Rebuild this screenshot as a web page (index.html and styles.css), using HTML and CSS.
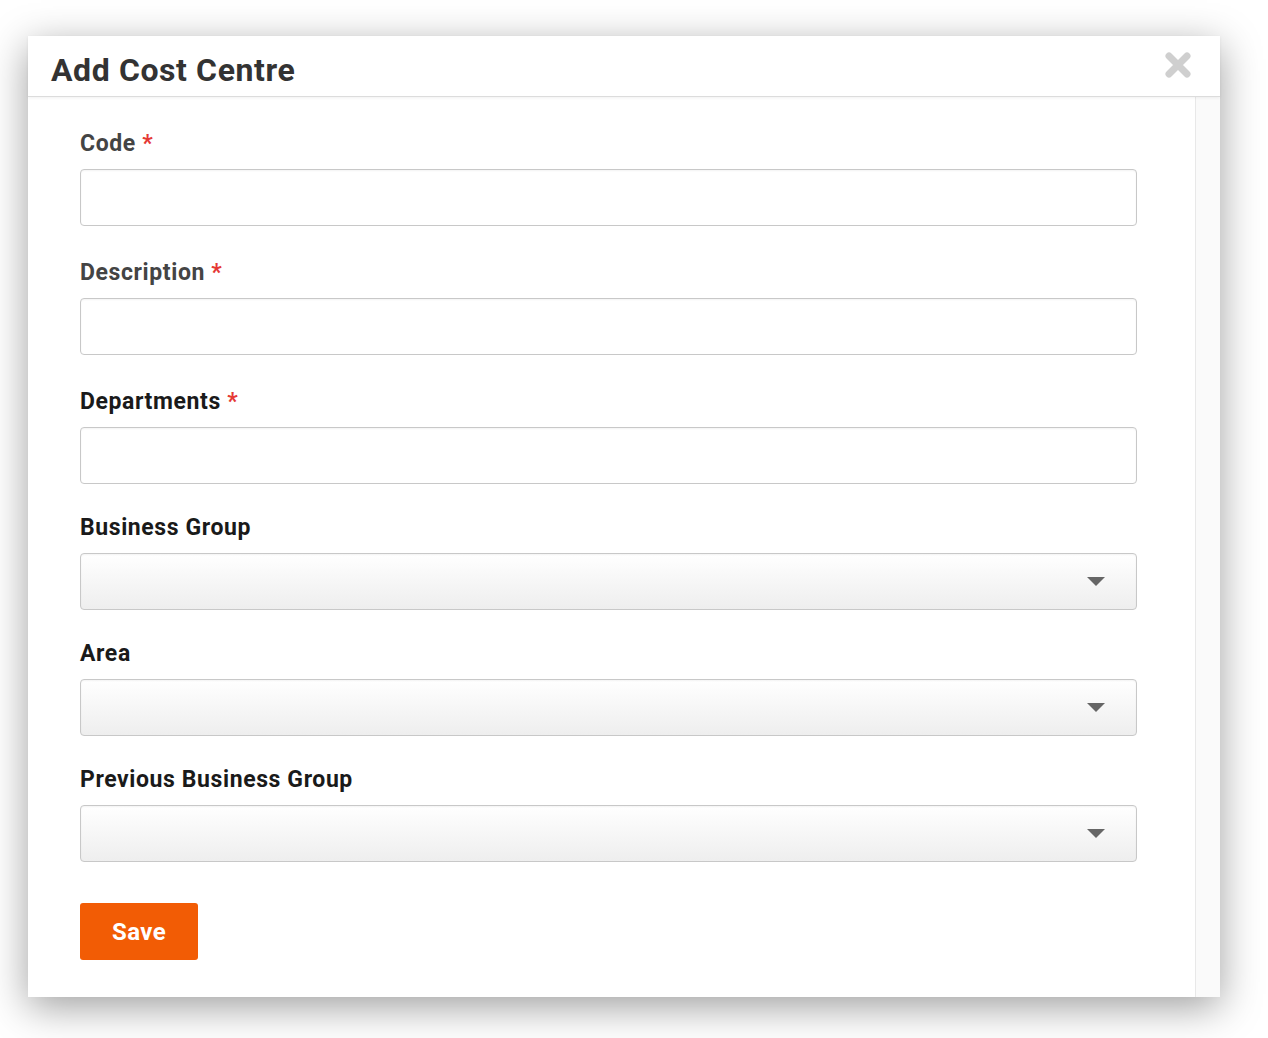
FILE: index.html
```html
<!DOCTYPE html>
<html lang="en">
<head>
    <meta charset="UTF-8">
    <meta name="viewport" content="width=device-width, initial-scale=1.0">
    <title>Add Cost Centre</title>
    <link rel="stylesheet" href="styles.css">
</head>
<body>
    <div class="modal">
        <div class="modal-header">
            <h2>Add Cost Centre</h2>
            <button class="close" aria-label="Close">
                <svg width="28" height="28" viewBox="0 0 28 28">
                    <path d="M5 5 L23 23 M23 5 L5 23" stroke="#cfcfcf" stroke-width="7" stroke-linecap="round"/>
                </svg>
            </button>
        </div>
        <div class="modal-body">
            <form class="form">
                <div class="field text-field">
                    <label class="muted">Code <span class="req">*</span></label>
                    <input type="text">
                </div>
                <div class="field text-field">
                    <label class="muted">Description <span class="req">*</span></label>
                    <input type="text">
                </div>
                <div class="field">
                    <label>Departments <span class="req">*</span></label>
                    <input type="text">
                </div>
                <div class="field">
                    <label>Business Group</label>
                    <div class="select"><select></select></div>
                </div>
                <div class="field">
                    <label>Area</label>
                    <div class="select"><select></select></div>
                </div>
                <div class="field">
                    <label>Previous Business Group</label>
                    <div class="select"><select></select></div>
                </div>
                <button type="button" class="save">Save</button>
            </form>
            <div class="scroll-track"></div>
        </div>
    </div>
</body>
</html>
```

FILE: styles.css
```css
body {
    margin: 0;
    padding: 36px 0 41px 28px;
    background: #fff;
    font-family: Roboto, "Liberation Sans", Arial, sans-serif;
}

.modal {
    width: 1192px;
    height: 961px;
    background: #fff;
    box-shadow: 0 10px 38px rgba(0, 0, 0, 0.38);
    display: flex;
    flex-direction: column;
}

.modal-header {
    height: 61px;
    border-bottom: 1px solid #dcdcdc;
    box-shadow: 0 1px 3px rgba(0, 0, 0, 0.06);
    display: flex;
    align-items: center;
    justify-content: space-between;
    padding: 0 28px 0 23px;
    box-sizing: border-box;
    position: relative;
}

.modal-header h2 {
    margin: 7px 0 0 0;
    font-size: 32px;
    font-weight: 700;
    letter-spacing: 0.6px;
    color: #333;
}

.close {
    border: none;
    background: none;
    padding: 0;
    cursor: pointer;
}

.modal-body {
    flex: 1;
    display: flex;
}

.form {
    flex: 1;
    padding: 34px 58px 0 52px;
}

.scroll-track {
    width: 24px;
    background: #fafafa;
    border-left: 1px solid #e8e8e8;
}

.field {
    margin-bottom: 31px;
}

.field.text-field {
    margin-bottom: 34px;
}

.field label {
    display: block;
    font-size: 23px;
    line-height: 26px;
    font-weight: 700;
    letter-spacing: 0.6px;
    color: #1a1a1a;
    margin-bottom: 12px;
}

.field label.muted {
    color: #444;
}

.req {
    color: #e53935;
}

.field input,
.select select {
    display: block;
    width: 100%;
    height: 57px;
    box-sizing: border-box;
    border: 1px solid #c8c8c8;
    border-radius: 4px;
    box-shadow: inset 0 1px 2px rgba(0, 0, 0, 0.05);
    font-size: 20px;
    font-family: inherit;
    padding: 0 14px;
    outline: none;
}

.field input {
    background: #fff;
}

.select {
    position: relative;
}

.select select {
    appearance: none;
    -webkit-appearance: none;
    background: linear-gradient(#ffffff, #eeeeee);
}

.select::after {
    content: "";
    position: absolute;
    right: 32px;
    top: 24px;
    border-left: 9px solid transparent;
    border-right: 9px solid transparent;
    border-top: 9px solid #666;
}

.save {
    margin-top: 10px;
    width: 118px;
    height: 57px;
    background: #f25c05;
    color: #fff;
    border: none;
    border-radius: 3px;
    font-family: inherit;
    font-size: 24px;
    font-weight: 700;
    letter-spacing: 0.4px;
    cursor: pointer;
}
```
